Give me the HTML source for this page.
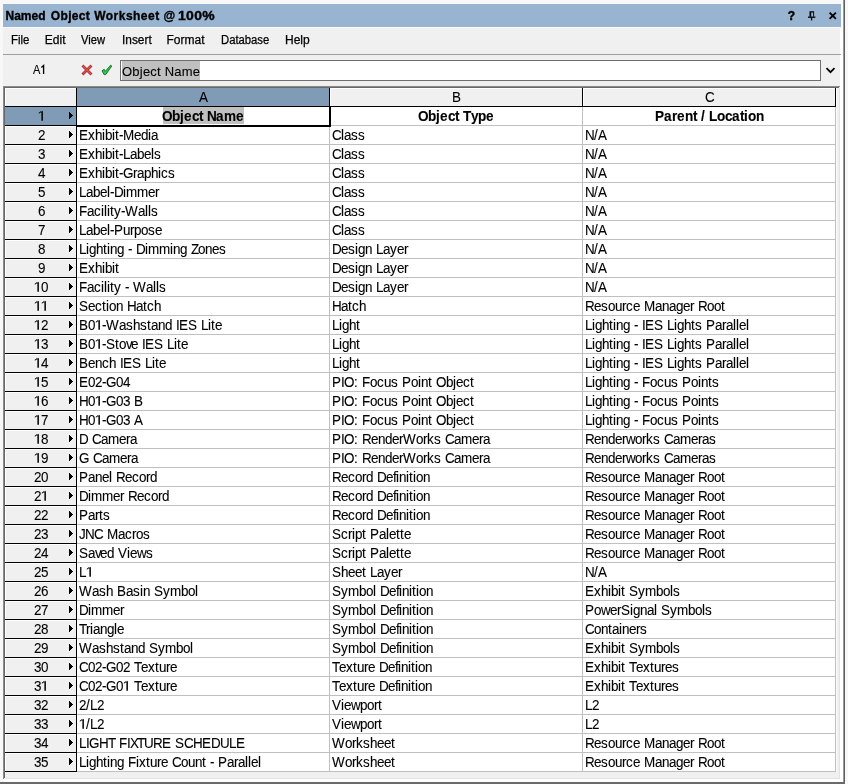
<!DOCTYPE html>
<html><head><meta charset="utf-8"><style>
*{margin:0;padding:0;box-sizing:border-box}
html,body{width:848px;height:784px;overflow:hidden;background:#f0f0f0;font-family:"Liberation Sans",sans-serif;color:#000}
.a{position:absolute}
.t{position:absolute;white-space:nowrap;line-height:1;-webkit-text-stroke:0.1px #000}
.f13{font-size:13px}
.g{position:absolute;white-space:nowrap;line-height:14px;height:14px;font-size:14px;-webkit-text-stroke:0.1px #000}
.g i{display:inline-block;font-style:normal;height:14px;transform:scaleX(0.96);transform-origin:0 0;vertical-align:top}
.g.b{font-weight:bold}
.g.b i{transform:scaleX(0.97)}
.tri{position:absolute;left:69px;width:4px;height:7px;background:linear-gradient(#000,#000) 0 0/1px 7px no-repeat,linear-gradient(#000,#000) 1px 1px/1px 5px no-repeat,linear-gradient(#000,#000) 2px 2px/1px 3px no-repeat,linear-gradient(#000,#000) 3px 3px/1px 1px no-repeat}
</style></head>
<body>
<div id="root" style="position:absolute;left:0;top:0;width:848px;height:784px;will-change:transform">
<div class="a" style="left:0px;top:0px;width:848px;height:784px;background:#f8f8f8"></div>
<div class="a" style="left:3px;top:4px;width:840px;height:778px;background:#f0f0f0"></div>
<div class="a" style="left:840px;top:4px;width:3px;height:778px;background:#ffffff"></div>
<div class="a" style="left:3px;top:779px;width:840px;height:3px;background:#ffffff"></div>
<div class="a" style="left:843px;top:0px;width:1px;height:784px;background:#9a9a9a"></div>
<div class="a" style="left:844px;top:0px;width:1px;height:784px;background:#5e5e5e"></div>
<div class="a" style="left:0px;top:782px;width:845px;height:2px;background:#6a6a6a"></div>
<div class="a" style="left:3px;top:4px;width:838px;height:23px;background:#99b4d1"></div>
<div class="a" style="left:3px;top:27px;width:838px;height:1px;background:#fafafa"></div>
<div class="t" style="left:5.5px;top:9.84px;font-size:12px;height:12px;font-weight:bold;color:#000;letter-spacing:0px;-webkit-text-stroke:0.35px #000;">Named</div>
<div class="t" style="left:50.8px;top:9.84px;font-size:12px;height:12px;font-weight:bold;color:#000;letter-spacing:0.34px;-webkit-text-stroke:0.35px #000;">Object</div>
<div class="t" style="left:94.2px;top:9.84px;font-size:12px;height:12px;font-weight:bold;color:#000;letter-spacing:0.48px;-webkit-text-stroke:0.35px #000;">Worksheet</div>
<div class="t" style="left:163.5px;top:9.84px;font-size:12px;height:12px;font-weight:bold;color:#000;letter-spacing:0px;-webkit-text-stroke:0.35px #000;">@</div>
<div class="t" style="left:178.3px;top:9.84px;font-size:12px;height:12px;font-weight:bold;color:#000;transform:scaleX(1.16);transform-origin:0 0;letter-spacing:0.3px;-webkit-text-stroke:0.35px #000;">100%</div>
<svg class="a" style="left:786px;top:9px" width="56" height="14" viewBox="786 9 56 14">
<text x="787.8" y="19.6" font-family="Liberation Sans" font-weight="bold" font-size="12" fill="#000" stroke="#000" stroke-width="0.4">?</text>
<path d="M809.5 11.2h4.6v5.6h-4.6z M811.2 12.4h2v4.4h-2z" fill="#000" fill-rule="evenodd"/>
<path d="M808 17.2h7.4" stroke="#000" stroke-width="1.3"/>
<path d="M811.6 17.5v3" stroke="#000" stroke-width="1.3"/>
<path d="M829.6 12.6l6.3 6.3M835.9 12.6l-6.3 6.3" stroke="#000" stroke-width="1.9"/>
</svg>
<div class="t" style="left:11.2px;top:34.14px;font-size:12px;height:12px;color:#000;transform:scaleX(0.95);transform-origin:0 0;-webkit-text-stroke:0.25px #000;">File</div>
<div class="t" style="left:44.8px;top:34.14px;font-size:12px;height:12px;color:#000;-webkit-text-stroke:0.25px #000;">Edit</div>
<div class="t" style="left:81px;top:34.14px;font-size:12px;height:12px;color:#000;transform:scaleX(0.93);transform-origin:0 0;-webkit-text-stroke:0.25px #000;">View</div>
<div class="t" style="left:121.5px;top:34.14px;font-size:12px;height:12px;color:#000;transform:scaleX(0.99);transform-origin:0 0;-webkit-text-stroke:0.25px #000;">Insert</div>
<div class="t" style="left:166.5px;top:34.14px;font-size:12px;height:12px;color:#000;-webkit-text-stroke:0.25px #000;">Format</div>
<div class="t" style="left:221px;top:34.14px;font-size:12px;height:12px;color:#000;transform:scaleX(0.94);transform-origin:0 0;-webkit-text-stroke:0.25px #000;">Database</div>
<div class="t" style="left:285px;top:34.14px;font-size:12px;height:12px;color:#000;-webkit-text-stroke:0.25px #000;">Help</div>
<div class="a" style="left:3px;top:54px;width:838px;height:1px;background:#a0a0a0"></div>
<div class="t" style="left:32.6px;top:64.04px;font-size:12px;height:12px;color:#000;transform:scaleX(0.92);transform-origin:0 0;">A</div>
<svg class="a" style="left:38px;top:62px" width="10" height="14" viewBox="38 62 10 14"><path d="M41.4 67.4L43.6 65.5V74" stroke="#000" stroke-width="1.3" fill="none"/></svg>
<svg class="a" style="left:80px;top:62px" width="36" height="16" viewBox="80 62 36 16">
<path d="M83.4 66.4l7.1 7.1M90.5 66.4l-7.1 7.1" stroke="#a83a3a" stroke-width="2.8" stroke-linecap="square"/>
<path d="M83.4 66.4l7.1 7.1M90.5 66.4l-7.1 7.1" stroke="#e04a4a" stroke-width="1.2" stroke-linecap="square"/>
<path d="M102 70.8L104.2 69.3L105.3 71.4L110.6 65.2L111.8 66L105.8 74.5L104.2 74.7Z" fill="#2fc850" stroke="#0d6a22" stroke-width="0.9" stroke-linejoin="round"/>
</svg>
<div class="a" style="left:120px;top:60px;width:701px;height:21px;background:#fff;border:1px solid #6e6e6e"></div>
<div class="a" style="left:122px;top:61px;width:78px;height:19px;background:#c0c0c0"></div>
<div class="t" style="left:122px;top:64.60px;font-size:13px;height:13px;color:#000;letter-spacing:0.22px;">Object Name</div>
<svg class="a" style="left:824px;top:65px" width="14" height="10" viewBox="824 65 14 10">
<path d="M826.5 68.2l4 4l4-4" stroke="#000" stroke-width="1.7" fill="none"/>
</svg>
<div class="a" style="left:3px;top:86px;width:837px;height:693px;background:#f0f0f0"></div>
<div class="a" style="left:3px;top:86px;width:837px;height:1px;background:#8a8a8a"></div>
<div class="a" style="left:3px;top:86px;width:1px;height:693px;background:#8a8a8a"></div>
<div class="a" style="left:4px;top:87px;width:835px;height:1px;background:#696969"></div>
<div class="a" style="left:4px;top:87px;width:1px;height:691px;background:#696969"></div>
<div class="a" style="left:839px;top:88px;width:1px;height:691px;background:#e3e3e3"></div>
<div class="a" style="left:5px;top:778px;width:835px;height:1px;background:#e3e3e3"></div>
<div class="a" style="left:836px;top:88px;width:1px;height:684px;background:#fbfbfb"></div>
<div class="a" style="left:77px;top:107px;width:758px;height:665px;background:#ffffff"></div>
<div class="a" style="left:5px;top:88px;width:71px;height:18px;background:#f0f0f0"></div>
<div class="a" style="left:5px;top:88px;width:71px;height:1px;background:#ffffff"></div>
<div class="a" style="left:5px;top:88px;width:1px;height:18px;background:#ffffff"></div>
<div class="a" style="left:5px;top:106px;width:72px;height:1px;background:#000"></div>
<div class="a" style="left:76px;top:88px;width:1px;height:19px;background:#000"></div>
<div class="a" style="left:77px;top:88px;width:252px;height:18px;background:#7f9bb5"></div>
<div class="a" style="left:329px;top:88px;width:1px;height:19px;background:#000"></div>
<div class="a" style="left:77px;top:106px;width:253px;height:1px;background:#000"></div>
<div class="g" style="left:199px;top:90.15px"><i style="width:9px">A</i></div>
<div class="a" style="left:330px;top:88px;width:252px;height:18px;background:#f0f0f0"></div>
<div class="a" style="left:330px;top:88px;width:252px;height:1px;background:#ffffff"></div>
<div class="a" style="left:330px;top:88px;width:1px;height:18px;background:#ffffff"></div>
<div class="a" style="left:582px;top:88px;width:1px;height:19px;background:#000"></div>
<div class="a" style="left:330px;top:106px;width:253px;height:1px;background:#000"></div>
<div class="g" style="left:452px;top:90.15px"><i style="width:9px">B</i></div>
<div class="a" style="left:583px;top:88px;width:252px;height:18px;background:#f0f0f0"></div>
<div class="a" style="left:583px;top:88px;width:252px;height:1px;background:#ffffff"></div>
<div class="a" style="left:583px;top:88px;width:1px;height:18px;background:#ffffff"></div>
<div class="a" style="left:835px;top:88px;width:1px;height:19px;background:#000"></div>
<div class="a" style="left:583px;top:106px;width:253px;height:1px;background:#000"></div>
<div class="g" style="left:705px;top:90.15px"><i style="width:9px">C</i></div>
<div class="a" style="left:5px;top:107px;width:71px;height:18px;background:#7f9bb5"></div>
<div class="a" style="left:5px;top:125px;width:72px;height:1px;background:#000"></div>
<div class="a" style="left:76px;top:107px;width:1px;height:18px;background:#000"></div>
<div class="g" style="left:38px;top:109.15px"><i style="width:7px;transform:none"><svg width="7" height="14" style="display:block"><path d="M3.4 1.85h1.5v10h-1.5z M4.9 1.85L3.4 1.85L0.8 3.7L0.8 4.7L3.4 3.1z"/></svg></i></div>
<div class="tri" style="top:112px"></div>
<div class="a" style="left:77px;top:125px;width:759px;height:1px;background:#c0c0c0"></div>
<div class="a" style="left:163px;top:107px;width:81px;height:17px;background:#c0c0c0"></div>
<div class="g b" style="left:162px;top:109.15px"><i style="width:10px">O</i><i style="width:8px">b</i><i style="width:4px">j</i><i style="width:8px">e</i><i style="width:7px">c</i><i style="width:4px">t</i><i style="width:4px"></i><i style="width:9px">N</i><i style="width:8px">a</i><i style="width:12px">m</i><i style="width:8px">e</i></div>
<div class="g b" style="left:418px;top:109.15px"><i style="width:10px">O</i><i style="width:8px">b</i><i style="width:4px">j</i><i style="width:8px">e</i><i style="width:7px">c</i><i style="width:4px">t</i><i style="width:4px"></i><i style="width:8px">T</i><i style="width:7px">y</i><i style="width:8px">p</i><i style="width:8px">e</i></div>
<div class="g b" style="left:655px;top:109.15px"><i style="width:9px">P</i><i style="width:8px">a</i><i style="width:5px">r</i><i style="width:8px">e</i><i style="width:8px">n</i><i style="width:4px">t</i><i style="width:4px"></i><i style="width:4px">/</i><i style="width:4px"></i><i style="width:8px">L</i><i style="width:8px">o</i><i style="width:7px">c</i><i style="width:8px">a</i><i style="width:4px">t</i><i style="width:4px">i</i><i style="width:8px">o</i><i style="width:8px">n</i></div>
<div class="a" style="left:5px;top:126px;width:71px;height:18px;background:#f0f0f0"></div>
<div class="a" style="left:5px;top:126px;width:71px;height:1px;background:#ffffff"></div>
<div class="a" style="left:5px;top:126px;width:1px;height:18px;background:#ffffff"></div>
<div class="a" style="left:5px;top:144px;width:72px;height:1px;background:#000"></div>
<div class="a" style="left:76px;top:126px;width:1px;height:18px;background:#000"></div>
<div class="g" style="left:38px;top:128.15px"><i style="width:7px">2</i></div>
<div class="tri" style="top:131px"></div>
<div class="a" style="left:77px;top:144px;width:759px;height:1px;background:#c0c0c0"></div>
<div class="g" style="left:79px;top:128.15px"><i style="width:9px">E</i><i style="width:7px">x</i><i style="width:7px">h</i><i style="width:3px">i</i><i style="width:7px">b</i><i style="width:3px">i</i><i style="width:4px">t</i><i style="width:4px">-</i><i style="width:11px">M</i><i style="width:7px">e</i><i style="width:7px">d</i><i style="width:3px">i</i><i style="width:7px">a</i></div>
<div class="g" style="left:332px;top:128.15px"><i style="width:9px">C</i><i style="width:3px">l</i><i style="width:7px">a</i><i style="width:7px">s</i><i style="width:7px">s</i></div>
<div class="g" style="left:585px;top:128.15px"><i style="width:9px">N</i><i style="width:4px">/</i><i style="width:9px">A</i></div>
<div class="a" style="left:5px;top:145px;width:71px;height:18px;background:#f0f0f0"></div>
<div class="a" style="left:5px;top:145px;width:71px;height:1px;background:#ffffff"></div>
<div class="a" style="left:5px;top:145px;width:1px;height:18px;background:#ffffff"></div>
<div class="a" style="left:5px;top:163px;width:72px;height:1px;background:#000"></div>
<div class="a" style="left:76px;top:145px;width:1px;height:18px;background:#000"></div>
<div class="g" style="left:38px;top:147.15px"><i style="width:7px">3</i></div>
<div class="tri" style="top:150px"></div>
<div class="a" style="left:77px;top:163px;width:759px;height:1px;background:#c0c0c0"></div>
<div class="g" style="left:79px;top:147.15px"><i style="width:9px">E</i><i style="width:7px">x</i><i style="width:7px">h</i><i style="width:3px">i</i><i style="width:7px">b</i><i style="width:3px">i</i><i style="width:4px">t</i><i style="width:4px">-</i><i style="width:7px">L</i><i style="width:7px">a</i><i style="width:7px">b</i><i style="width:7px">e</i><i style="width:3px">l</i><i style="width:7px">s</i></div>
<div class="g" style="left:332px;top:147.15px"><i style="width:9px">C</i><i style="width:3px">l</i><i style="width:7px">a</i><i style="width:7px">s</i><i style="width:7px">s</i></div>
<div class="g" style="left:585px;top:147.15px"><i style="width:9px">N</i><i style="width:4px">/</i><i style="width:9px">A</i></div>
<div class="a" style="left:5px;top:164px;width:71px;height:18px;background:#f0f0f0"></div>
<div class="a" style="left:5px;top:164px;width:71px;height:1px;background:#ffffff"></div>
<div class="a" style="left:5px;top:164px;width:1px;height:18px;background:#ffffff"></div>
<div class="a" style="left:5px;top:182px;width:72px;height:1px;background:#000"></div>
<div class="a" style="left:76px;top:164px;width:1px;height:18px;background:#000"></div>
<div class="g" style="left:38px;top:166.15px"><i style="width:7px">4</i></div>
<div class="tri" style="top:169px"></div>
<div class="a" style="left:77px;top:182px;width:759px;height:1px;background:#c0c0c0"></div>
<div class="g" style="left:79px;top:166.15px"><i style="width:9px">E</i><i style="width:7px">x</i><i style="width:7px">h</i><i style="width:3px">i</i><i style="width:7px">b</i><i style="width:3px">i</i><i style="width:4px">t</i><i style="width:4px">-</i><i style="width:10px">G</i><i style="width:4px">r</i><i style="width:7px">a</i><i style="width:7px">p</i><i style="width:7px">h</i><i style="width:3px">i</i><i style="width:7px">c</i><i style="width:7px">s</i></div>
<div class="g" style="left:332px;top:166.15px"><i style="width:9px">C</i><i style="width:3px">l</i><i style="width:7px">a</i><i style="width:7px">s</i><i style="width:7px">s</i></div>
<div class="g" style="left:585px;top:166.15px"><i style="width:9px">N</i><i style="width:4px">/</i><i style="width:9px">A</i></div>
<div class="a" style="left:5px;top:183px;width:71px;height:18px;background:#f0f0f0"></div>
<div class="a" style="left:5px;top:183px;width:71px;height:1px;background:#ffffff"></div>
<div class="a" style="left:5px;top:183px;width:1px;height:18px;background:#ffffff"></div>
<div class="a" style="left:5px;top:201px;width:72px;height:1px;background:#000"></div>
<div class="a" style="left:76px;top:183px;width:1px;height:18px;background:#000"></div>
<div class="g" style="left:38px;top:185.15px"><i style="width:7px">5</i></div>
<div class="tri" style="top:188px"></div>
<div class="a" style="left:77px;top:201px;width:759px;height:1px;background:#c0c0c0"></div>
<div class="g" style="left:79px;top:185.15px"><i style="width:7px">L</i><i style="width:7px">a</i><i style="width:7px">b</i><i style="width:7px">e</i><i style="width:3px">l</i><i style="width:4px">-</i><i style="width:9px">D</i><i style="width:3px">i</i><i style="width:11px">m</i><i style="width:11px">m</i><i style="width:7px">e</i><i style="width:4px">r</i></div>
<div class="g" style="left:332px;top:185.15px"><i style="width:9px">C</i><i style="width:3px">l</i><i style="width:7px">a</i><i style="width:7px">s</i><i style="width:7px">s</i></div>
<div class="g" style="left:585px;top:185.15px"><i style="width:9px">N</i><i style="width:4px">/</i><i style="width:9px">A</i></div>
<div class="a" style="left:5px;top:202px;width:71px;height:18px;background:#f0f0f0"></div>
<div class="a" style="left:5px;top:202px;width:71px;height:1px;background:#ffffff"></div>
<div class="a" style="left:5px;top:202px;width:1px;height:18px;background:#ffffff"></div>
<div class="a" style="left:5px;top:220px;width:72px;height:1px;background:#000"></div>
<div class="a" style="left:76px;top:202px;width:1px;height:18px;background:#000"></div>
<div class="g" style="left:38px;top:204.15px"><i style="width:7px">6</i></div>
<div class="tri" style="top:207px"></div>
<div class="a" style="left:77px;top:220px;width:759px;height:1px;background:#c0c0c0"></div>
<div class="g" style="left:79px;top:204.15px"><i style="width:8px">F</i><i style="width:7px">a</i><i style="width:7px">c</i><i style="width:3px">i</i><i style="width:3px">l</i><i style="width:3px">i</i><i style="width:4px">t</i><i style="width:7px">y</i><i style="width:4px">-</i><i style="width:13px">W</i><i style="width:7px">a</i><i style="width:3px">l</i><i style="width:3px">l</i><i style="width:7px">s</i></div>
<div class="g" style="left:332px;top:204.15px"><i style="width:9px">C</i><i style="width:3px">l</i><i style="width:7px">a</i><i style="width:7px">s</i><i style="width:7px">s</i></div>
<div class="g" style="left:585px;top:204.15px"><i style="width:9px">N</i><i style="width:4px">/</i><i style="width:9px">A</i></div>
<div class="a" style="left:5px;top:221px;width:71px;height:18px;background:#f0f0f0"></div>
<div class="a" style="left:5px;top:221px;width:71px;height:1px;background:#ffffff"></div>
<div class="a" style="left:5px;top:221px;width:1px;height:18px;background:#ffffff"></div>
<div class="a" style="left:5px;top:239px;width:72px;height:1px;background:#000"></div>
<div class="a" style="left:76px;top:221px;width:1px;height:18px;background:#000"></div>
<div class="g" style="left:38px;top:223.15px"><i style="width:7px">7</i></div>
<div class="tri" style="top:226px"></div>
<div class="a" style="left:77px;top:239px;width:759px;height:1px;background:#c0c0c0"></div>
<div class="g" style="left:79px;top:223.15px"><i style="width:7px">L</i><i style="width:7px">a</i><i style="width:7px">b</i><i style="width:7px">e</i><i style="width:3px">l</i><i style="width:4px">-</i><i style="width:9px">P</i><i style="width:7px">u</i><i style="width:4px">r</i><i style="width:7px">p</i><i style="width:7px">o</i><i style="width:7px">s</i><i style="width:7px">e</i></div>
<div class="g" style="left:332px;top:223.15px"><i style="width:9px">C</i><i style="width:3px">l</i><i style="width:7px">a</i><i style="width:7px">s</i><i style="width:7px">s</i></div>
<div class="g" style="left:585px;top:223.15px"><i style="width:9px">N</i><i style="width:4px">/</i><i style="width:9px">A</i></div>
<div class="a" style="left:5px;top:240px;width:71px;height:18px;background:#f0f0f0"></div>
<div class="a" style="left:5px;top:240px;width:71px;height:1px;background:#ffffff"></div>
<div class="a" style="left:5px;top:240px;width:1px;height:18px;background:#ffffff"></div>
<div class="a" style="left:5px;top:258px;width:72px;height:1px;background:#000"></div>
<div class="a" style="left:76px;top:240px;width:1px;height:18px;background:#000"></div>
<div class="g" style="left:38px;top:242.15px"><i style="width:7px">8</i></div>
<div class="tri" style="top:245px"></div>
<div class="a" style="left:77px;top:258px;width:759px;height:1px;background:#c0c0c0"></div>
<div class="g" style="left:79px;top:242.15px"><i style="width:7px">L</i><i style="width:3px">i</i><i style="width:7px">g</i><i style="width:7px">h</i><i style="width:4px">t</i><i style="width:3px">i</i><i style="width:7px">n</i><i style="width:7px">g</i><i style="width:4px"></i><i style="width:4px">-</i><i style="width:4px"></i><i style="width:9px">D</i><i style="width:3px">i</i><i style="width:11px">m</i><i style="width:11px">m</i><i style="width:3px">i</i><i style="width:7px">n</i><i style="width:7px">g</i><i style="width:4px"></i><i style="width:7px">Z</i><i style="width:7px">o</i><i style="width:7px">n</i><i style="width:7px">e</i><i style="width:7px">s</i></div>
<div class="g" style="left:332px;top:242.15px"><i style="width:9px">D</i><i style="width:7px">e</i><i style="width:7px">s</i><i style="width:3px">i</i><i style="width:7px">g</i><i style="width:7px">n</i><i style="width:4px"></i><i style="width:7px">L</i><i style="width:7px">a</i><i style="width:7px">y</i><i style="width:7px">e</i><i style="width:4px">r</i></div>
<div class="g" style="left:585px;top:242.15px"><i style="width:9px">N</i><i style="width:4px">/</i><i style="width:9px">A</i></div>
<div class="a" style="left:5px;top:259px;width:71px;height:18px;background:#f0f0f0"></div>
<div class="a" style="left:5px;top:259px;width:71px;height:1px;background:#ffffff"></div>
<div class="a" style="left:5px;top:259px;width:1px;height:18px;background:#ffffff"></div>
<div class="a" style="left:5px;top:277px;width:72px;height:1px;background:#000"></div>
<div class="a" style="left:76px;top:259px;width:1px;height:18px;background:#000"></div>
<div class="g" style="left:38px;top:261.15px"><i style="width:7px">9</i></div>
<div class="tri" style="top:264px"></div>
<div class="a" style="left:77px;top:277px;width:759px;height:1px;background:#c0c0c0"></div>
<div class="g" style="left:79px;top:261.15px"><i style="width:9px">E</i><i style="width:7px">x</i><i style="width:7px">h</i><i style="width:3px">i</i><i style="width:7px">b</i><i style="width:3px">i</i><i style="width:4px">t</i></div>
<div class="g" style="left:332px;top:261.15px"><i style="width:9px">D</i><i style="width:7px">e</i><i style="width:7px">s</i><i style="width:3px">i</i><i style="width:7px">g</i><i style="width:7px">n</i><i style="width:4px"></i><i style="width:7px">L</i><i style="width:7px">a</i><i style="width:7px">y</i><i style="width:7px">e</i><i style="width:4px">r</i></div>
<div class="g" style="left:585px;top:261.15px"><i style="width:9px">N</i><i style="width:4px">/</i><i style="width:9px">A</i></div>
<div class="a" style="left:5px;top:278px;width:71px;height:18px;background:#f0f0f0"></div>
<div class="a" style="left:5px;top:278px;width:71px;height:1px;background:#ffffff"></div>
<div class="a" style="left:5px;top:278px;width:1px;height:18px;background:#ffffff"></div>
<div class="a" style="left:5px;top:296px;width:72px;height:1px;background:#000"></div>
<div class="a" style="left:76px;top:278px;width:1px;height:18px;background:#000"></div>
<div class="g" style="left:34px;top:280.15px"><i style="width:7px;transform:none"><svg width="7" height="14" style="display:block"><path d="M3.4 1.85h1.5v10h-1.5z M4.9 1.85L3.4 1.85L0.8 3.7L0.8 4.7L3.4 3.1z"/></svg></i><i style="width:7px">0</i></div>
<div class="tri" style="top:283px"></div>
<div class="a" style="left:77px;top:296px;width:759px;height:1px;background:#c0c0c0"></div>
<div class="g" style="left:79px;top:280.15px"><i style="width:8px">F</i><i style="width:7px">a</i><i style="width:7px">c</i><i style="width:3px">i</i><i style="width:3px">l</i><i style="width:3px">i</i><i style="width:4px">t</i><i style="width:7px">y</i><i style="width:4px"></i><i style="width:4px">-</i><i style="width:4px"></i><i style="width:13px">W</i><i style="width:7px">a</i><i style="width:3px">l</i><i style="width:3px">l</i><i style="width:7px">s</i></div>
<div class="g" style="left:332px;top:280.15px"><i style="width:9px">D</i><i style="width:7px">e</i><i style="width:7px">s</i><i style="width:3px">i</i><i style="width:7px">g</i><i style="width:7px">n</i><i style="width:4px"></i><i style="width:7px">L</i><i style="width:7px">a</i><i style="width:7px">y</i><i style="width:7px">e</i><i style="width:4px">r</i></div>
<div class="g" style="left:585px;top:280.15px"><i style="width:9px">N</i><i style="width:4px">/</i><i style="width:9px">A</i></div>
<div class="a" style="left:5px;top:297px;width:71px;height:18px;background:#f0f0f0"></div>
<div class="a" style="left:5px;top:297px;width:71px;height:1px;background:#ffffff"></div>
<div class="a" style="left:5px;top:297px;width:1px;height:18px;background:#ffffff"></div>
<div class="a" style="left:5px;top:315px;width:72px;height:1px;background:#000"></div>
<div class="a" style="left:76px;top:297px;width:1px;height:18px;background:#000"></div>
<div class="g" style="left:34px;top:299.15px"><i style="width:7px;transform:none"><svg width="7" height="14" style="display:block"><path d="M3.4 1.85h1.5v10h-1.5z M4.9 1.85L3.4 1.85L0.8 3.7L0.8 4.7L3.4 3.1z"/></svg></i><i style="width:7px;transform:none"><svg width="7" height="14" style="display:block"><path d="M3.4 1.85h1.5v10h-1.5z M4.9 1.85L3.4 1.85L0.8 3.7L0.8 4.7L3.4 3.1z"/></svg></i></div>
<div class="tri" style="top:302px"></div>
<div class="a" style="left:77px;top:315px;width:759px;height:1px;background:#c0c0c0"></div>
<div class="g" style="left:79px;top:299.15px"><i style="width:9px">S</i><i style="width:7px">e</i><i style="width:7px">c</i><i style="width:4px">t</i><i style="width:3px">i</i><i style="width:7px">o</i><i style="width:7px">n</i><i style="width:4px"></i><i style="width:9px">H</i><i style="width:7px">a</i><i style="width:4px">t</i><i style="width:7px">c</i><i style="width:7px">h</i></div>
<div class="g" style="left:332px;top:299.15px"><i style="width:9px">H</i><i style="width:7px">a</i><i style="width:4px">t</i><i style="width:7px">c</i><i style="width:7px">h</i></div>
<div class="g" style="left:585px;top:299.15px"><i style="width:9px">R</i><i style="width:7px">e</i><i style="width:7px">s</i><i style="width:7px">o</i><i style="width:7px">u</i><i style="width:4px">r</i><i style="width:7px">c</i><i style="width:7px">e</i><i style="width:4px"></i><i style="width:11px">M</i><i style="width:7px">a</i><i style="width:7px">n</i><i style="width:7px">a</i><i style="width:7px">g</i><i style="width:7px">e</i><i style="width:4px">r</i><i style="width:4px"></i><i style="width:9px">R</i><i style="width:7px">o</i><i style="width:7px">o</i><i style="width:4px">t</i></div>
<div class="a" style="left:5px;top:316px;width:71px;height:18px;background:#f0f0f0"></div>
<div class="a" style="left:5px;top:316px;width:71px;height:1px;background:#ffffff"></div>
<div class="a" style="left:5px;top:316px;width:1px;height:18px;background:#ffffff"></div>
<div class="a" style="left:5px;top:334px;width:72px;height:1px;background:#000"></div>
<div class="a" style="left:76px;top:316px;width:1px;height:18px;background:#000"></div>
<div class="g" style="left:34px;top:318.15px"><i style="width:7px;transform:none"><svg width="7" height="14" style="display:block"><path d="M3.4 1.85h1.5v10h-1.5z M4.9 1.85L3.4 1.85L0.8 3.7L0.8 4.7L3.4 3.1z"/></svg></i><i style="width:7px">2</i></div>
<div class="tri" style="top:321px"></div>
<div class="a" style="left:77px;top:334px;width:759px;height:1px;background:#c0c0c0"></div>
<div class="g" style="left:79px;top:318.15px"><i style="width:9px">B</i><i style="width:7px">0</i><i style="width:7px;transform:none"><svg width="7" height="14" style="display:block"><path d="M3.4 1.85h1.5v10h-1.5z M4.9 1.85L3.4 1.85L0.8 3.7L0.8 4.7L3.4 3.1z"/></svg></i><i style="width:4px">-</i><i style="width:13px">W</i><i style="width:7px">a</i><i style="width:7px">s</i><i style="width:7px">h</i><i style="width:7px">s</i><i style="width:4px">t</i><i style="width:7px">a</i><i style="width:7px">n</i><i style="width:7px">d</i><i style="width:4px"></i><i style="width:3px">I</i><i style="width:9px">E</i><i style="width:9px">S</i><i style="width:4px"></i><i style="width:7px">L</i><i style="width:3px">i</i><i style="width:4px">t</i><i style="width:7px">e</i></div>
<div class="g" style="left:332px;top:318.15px"><i style="width:7px">L</i><i style="width:3px">i</i><i style="width:7px">g</i><i style="width:7px">h</i><i style="width:4px">t</i></div>
<div class="g" style="left:585px;top:318.15px"><i style="width:7px">L</i><i style="width:3px">i</i><i style="width:7px">g</i><i style="width:7px">h</i><i style="width:4px">t</i><i style="width:3px">i</i><i style="width:7px">n</i><i style="width:7px">g</i><i style="width:4px"></i><i style="width:4px">-</i><i style="width:4px"></i><i style="width:3px">I</i><i style="width:9px">E</i><i style="width:9px">S</i><i style="width:4px"></i><i style="width:7px">L</i><i style="width:3px">i</i><i style="width:7px">g</i><i style="width:7px">h</i><i style="width:4px">t</i><i style="width:7px">s</i><i style="width:4px"></i><i style="width:9px">P</i><i style="width:7px">a</i><i style="width:4px">r</i><i style="width:7px">a</i><i style="width:3px">l</i><i style="width:3px">l</i><i style="width:7px">e</i><i style="width:3px">l</i></div>
<div class="a" style="left:5px;top:335px;width:71px;height:18px;background:#f0f0f0"></div>
<div class="a" style="left:5px;top:335px;width:71px;height:1px;background:#ffffff"></div>
<div class="a" style="left:5px;top:335px;width:1px;height:18px;background:#ffffff"></div>
<div class="a" style="left:5px;top:353px;width:72px;height:1px;background:#000"></div>
<div class="a" style="left:76px;top:335px;width:1px;height:18px;background:#000"></div>
<div class="g" style="left:34px;top:337.15px"><i style="width:7px;transform:none"><svg width="7" height="14" style="display:block"><path d="M3.4 1.85h1.5v10h-1.5z M4.9 1.85L3.4 1.85L0.8 3.7L0.8 4.7L3.4 3.1z"/></svg></i><i style="width:7px">3</i></div>
<div class="tri" style="top:340px"></div>
<div class="a" style="left:77px;top:353px;width:759px;height:1px;background:#c0c0c0"></div>
<div class="g" style="left:79px;top:337.15px"><i style="width:9px">B</i><i style="width:7px">0</i><i style="width:7px;transform:none"><svg width="7" height="14" style="display:block"><path d="M3.4 1.85h1.5v10h-1.5z M4.9 1.85L3.4 1.85L0.8 3.7L0.8 4.7L3.4 3.1z"/></svg></i><i style="width:4px">-</i><i style="width:9px">S</i><i style="width:4px">t</i><i style="width:7px">o</i><i style="width:5px">v</i><i style="width:7px">e</i><i style="width:4px"></i><i style="width:3px">I</i><i style="width:9px">E</i><i style="width:9px">S</i><i style="width:4px"></i><i style="width:7px">L</i><i style="width:3px">i</i><i style="width:4px">t</i><i style="width:7px">e</i></div>
<div class="g" style="left:332px;top:337.15px"><i style="width:7px">L</i><i style="width:3px">i</i><i style="width:7px">g</i><i style="width:7px">h</i><i style="width:4px">t</i></div>
<div class="g" style="left:585px;top:337.15px"><i style="width:7px">L</i><i style="width:3px">i</i><i style="width:7px">g</i><i style="width:7px">h</i><i style="width:4px">t</i><i style="width:3px">i</i><i style="width:7px">n</i><i style="width:7px">g</i><i style="width:4px"></i><i style="width:4px">-</i><i style="width:4px"></i><i style="width:3px">I</i><i style="width:9px">E</i><i style="width:9px">S</i><i style="width:4px"></i><i style="width:7px">L</i><i style="width:3px">i</i><i style="width:7px">g</i><i style="width:7px">h</i><i style="width:4px">t</i><i style="width:7px">s</i><i style="width:4px"></i><i style="width:9px">P</i><i style="width:7px">a</i><i style="width:4px">r</i><i style="width:7px">a</i><i style="width:3px">l</i><i style="width:3px">l</i><i style="width:7px">e</i><i style="width:3px">l</i></div>
<div class="a" style="left:5px;top:354px;width:71px;height:18px;background:#f0f0f0"></div>
<div class="a" style="left:5px;top:354px;width:71px;height:1px;background:#ffffff"></div>
<div class="a" style="left:5px;top:354px;width:1px;height:18px;background:#ffffff"></div>
<div class="a" style="left:5px;top:372px;width:72px;height:1px;background:#000"></div>
<div class="a" style="left:76px;top:354px;width:1px;height:18px;background:#000"></div>
<div class="g" style="left:34px;top:356.15px"><i style="width:7px;transform:none"><svg width="7" height="14" style="display:block"><path d="M3.4 1.85h1.5v10h-1.5z M4.9 1.85L3.4 1.85L0.8 3.7L0.8 4.7L3.4 3.1z"/></svg></i><i style="width:7px">4</i></div>
<div class="tri" style="top:359px"></div>
<div class="a" style="left:77px;top:372px;width:759px;height:1px;background:#c0c0c0"></div>
<div class="g" style="left:79px;top:356.15px"><i style="width:9px">B</i><i style="width:7px">e</i><i style="width:7px">n</i><i style="width:7px">c</i><i style="width:7px">h</i><i style="width:4px"></i><i style="width:3px">I</i><i style="width:9px">E</i><i style="width:9px">S</i><i style="width:4px"></i><i style="width:7px">L</i><i style="width:3px">i</i><i style="width:4px">t</i><i style="width:7px">e</i></div>
<div class="g" style="left:332px;top:356.15px"><i style="width:7px">L</i><i style="width:3px">i</i><i style="width:7px">g</i><i style="width:7px">h</i><i style="width:4px">t</i></div>
<div class="g" style="left:585px;top:356.15px"><i style="width:7px">L</i><i style="width:3px">i</i><i style="width:7px">g</i><i style="width:7px">h</i><i style="width:4px">t</i><i style="width:3px">i</i><i style="width:7px">n</i><i style="width:7px">g</i><i style="width:4px"></i><i style="width:4px">-</i><i style="width:4px"></i><i style="width:3px">I</i><i style="width:9px">E</i><i style="width:9px">S</i><i style="width:4px"></i><i style="width:7px">L</i><i style="width:3px">i</i><i style="width:7px">g</i><i style="width:7px">h</i><i style="width:4px">t</i><i style="width:7px">s</i><i style="width:4px"></i><i style="width:9px">P</i><i style="width:7px">a</i><i style="width:4px">r</i><i style="width:7px">a</i><i style="width:3px">l</i><i style="width:3px">l</i><i style="width:7px">e</i><i style="width:3px">l</i></div>
<div class="a" style="left:5px;top:373px;width:71px;height:18px;background:#f0f0f0"></div>
<div class="a" style="left:5px;top:373px;width:71px;height:1px;background:#ffffff"></div>
<div class="a" style="left:5px;top:373px;width:1px;height:18px;background:#ffffff"></div>
<div class="a" style="left:5px;top:391px;width:72px;height:1px;background:#000"></div>
<div class="a" style="left:76px;top:373px;width:1px;height:18px;background:#000"></div>
<div class="g" style="left:34px;top:375.15px"><i style="width:7px;transform:none"><svg width="7" height="14" style="display:block"><path d="M3.4 1.85h1.5v10h-1.5z M4.9 1.85L3.4 1.85L0.8 3.7L0.8 4.7L3.4 3.1z"/></svg></i><i style="width:7px">5</i></div>
<div class="tri" style="top:378px"></div>
<div class="a" style="left:77px;top:391px;width:759px;height:1px;background:#c0c0c0"></div>
<div class="g" style="left:79px;top:375.15px"><i style="width:9px">E</i><i style="width:7px">0</i><i style="width:7px">2</i><i style="width:4px">-</i><i style="width:10px">G</i><i style="width:7px">0</i><i style="width:7px">4</i></div>
<div class="g" style="left:332px;top:375.15px"><i style="width:9px">P</i><i style="width:3px">I</i><i style="width:10px">O</i><i style="width:4px">:</i><i style="width:4px"></i><i style="width:8px">F</i><i style="width:7px">o</i><i style="width:7px">c</i><i style="width:7px">u</i><i style="width:7px">s</i><i style="width:4px"></i><i style="width:9px">P</i><i style="width:7px">o</i><i style="width:3px">i</i><i style="width:7px">n</i><i style="width:4px">t</i><i style="width:4px"></i><i style="width:10px">O</i><i style="width:7px">b</i><i style="width:3px">j</i><i style="width:7px">e</i><i style="width:7px">c</i><i style="width:4px">t</i></div>
<div class="g" style="left:585px;top:375.15px"><i style="width:7px">L</i><i style="width:3px">i</i><i style="width:7px">g</i><i style="width:7px">h</i><i style="width:4px">t</i><i style="width:3px">i</i><i style="width:7px">n</i><i style="width:7px">g</i><i style="width:4px"></i><i style="width:4px">-</i><i style="width:4px"></i><i style="width:8px">F</i><i style="width:7px">o</i><i style="width:7px">c</i><i style="width:7px">u</i><i style="width:7px">s</i><i style="width:4px"></i><i style="width:9px">P</i><i style="width:7px">o</i><i style="width:3px">i</i><i style="width:7px">n</i><i style="width:4px">t</i><i style="width:7px">s</i></div>
<div class="a" style="left:5px;top:392px;width:71px;height:18px;background:#f0f0f0"></div>
<div class="a" style="left:5px;top:392px;width:71px;height:1px;background:#ffffff"></div>
<div class="a" style="left:5px;top:392px;width:1px;height:18px;background:#ffffff"></div>
<div class="a" style="left:5px;top:410px;width:72px;height:1px;background:#000"></div>
<div class="a" style="left:76px;top:392px;width:1px;height:18px;background:#000"></div>
<div class="g" style="left:34px;top:394.15px"><i style="width:7px;transform:none"><svg width="7" height="14" style="display:block"><path d="M3.4 1.85h1.5v10h-1.5z M4.9 1.85L3.4 1.85L0.8 3.7L0.8 4.7L3.4 3.1z"/></svg></i><i style="width:7px">6</i></div>
<div class="tri" style="top:397px"></div>
<div class="a" style="left:77px;top:410px;width:759px;height:1px;background:#c0c0c0"></div>
<div class="g" style="left:79px;top:394.15px"><i style="width:9px">H</i><i style="width:7px">0</i><i style="width:7px;transform:none"><svg width="7" height="14" style="display:block"><path d="M3.4 1.85h1.5v10h-1.5z M4.9 1.85L3.4 1.85L0.8 3.7L0.8 4.7L3.4 3.1z"/></svg></i><i style="width:4px">-</i><i style="width:10px">G</i><i style="width:7px">0</i><i style="width:7px">3</i><i style="width:4px"></i><i style="width:9px">B</i></div>
<div class="g" style="left:332px;top:394.15px"><i style="width:9px">P</i><i style="width:3px">I</i><i style="width:10px">O</i><i style="width:4px">:</i><i style="width:4px"></i><i style="width:8px">F</i><i style="width:7px">o</i><i style="width:7px">c</i><i style="width:7px">u</i><i style="width:7px">s</i><i style="width:4px"></i><i style="width:9px">P</i><i style="width:7px">o</i><i style="width:3px">i</i><i style="width:7px">n</i><i style="width:4px">t</i><i style="width:4px"></i><i style="width:10px">O</i><i style="width:7px">b</i><i style="width:3px">j</i><i style="width:7px">e</i><i style="width:7px">c</i><i style="width:4px">t</i></div>
<div class="g" style="left:585px;top:394.15px"><i style="width:7px">L</i><i style="width:3px">i</i><i style="width:7px">g</i><i style="width:7px">h</i><i style="width:4px">t</i><i style="width:3px">i</i><i style="width:7px">n</i><i style="width:7px">g</i><i style="width:4px"></i><i style="width:4px">-</i><i style="width:4px"></i><i style="width:8px">F</i><i style="width:7px">o</i><i style="width:7px">c</i><i style="width:7px">u</i><i style="width:7px">s</i><i style="width:4px"></i><i style="width:9px">P</i><i style="width:7px">o</i><i style="width:3px">i</i><i style="width:7px">n</i><i style="width:4px">t</i><i style="width:7px">s</i></div>
<div class="a" style="left:5px;top:411px;width:71px;height:18px;background:#f0f0f0"></div>
<div class="a" style="left:5px;top:411px;width:71px;height:1px;background:#ffffff"></div>
<div class="a" style="left:5px;top:411px;width:1px;height:18px;background:#ffffff"></div>
<div class="a" style="left:5px;top:429px;width:72px;height:1px;background:#000"></div>
<div class="a" style="left:76px;top:411px;width:1px;height:18px;background:#000"></div>
<div class="g" style="left:34px;top:413.15px"><i style="width:7px;transform:none"><svg width="7" height="14" style="display:block"><path d="M3.4 1.85h1.5v10h-1.5z M4.9 1.85L3.4 1.85L0.8 3.7L0.8 4.7L3.4 3.1z"/></svg></i><i style="width:7px">7</i></div>
<div class="tri" style="top:416px"></div>
<div class="a" style="left:77px;top:429px;width:759px;height:1px;background:#c0c0c0"></div>
<div class="g" style="left:79px;top:413.15px"><i style="width:9px">H</i><i style="width:7px">0</i><i style="width:7px;transform:none"><svg width="7" height="14" style="display:block"><path d="M3.4 1.85h1.5v10h-1.5z M4.9 1.85L3.4 1.85L0.8 3.7L0.8 4.7L3.4 3.1z"/></svg></i><i style="width:4px">-</i><i style="width:10px">G</i><i style="width:7px">0</i><i style="width:7px">3</i><i style="width:4px"></i><i style="width:9px">A</i></div>
<div class="g" style="left:332px;top:413.15px"><i style="width:9px">P</i><i style="width:3px">I</i><i style="width:10px">O</i><i style="width:4px">:</i><i style="width:4px"></i><i style="width:8px">F</i><i style="width:7px">o</i><i style="width:7px">c</i><i style="width:7px">u</i><i style="width:7px">s</i><i style="width:4px"></i><i style="width:9px">P</i><i style="width:7px">o</i><i style="width:3px">i</i><i style="width:7px">n</i><i style="width:4px">t</i><i style="width:4px"></i><i style="width:10px">O</i><i style="width:7px">b</i><i style="width:3px">j</i><i style="width:7px">e</i><i style="width:7px">c</i><i style="width:4px">t</i></div>
<div class="g" style="left:585px;top:413.15px"><i style="width:7px">L</i><i style="width:3px">i</i><i style="width:7px">g</i><i style="width:7px">h</i><i style="width:4px">t</i><i style="width:3px">i</i><i style="width:7px">n</i><i style="width:7px">g</i><i style="width:4px"></i><i style="width:4px">-</i><i style="width:4px"></i><i style="width:8px">F</i><i style="width:7px">o</i><i style="width:7px">c</i><i style="width:7px">u</i><i style="width:7px">s</i><i style="width:4px"></i><i style="width:9px">P</i><i style="width:7px">o</i><i style="width:3px">i</i><i style="width:7px">n</i><i style="width:4px">t</i><i style="width:7px">s</i></div>
<div class="a" style="left:5px;top:430px;width:71px;height:18px;background:#f0f0f0"></div>
<div class="a" style="left:5px;top:430px;width:71px;height:1px;background:#ffffff"></div>
<div class="a" style="left:5px;top:430px;width:1px;height:18px;background:#ffffff"></div>
<div class="a" style="left:5px;top:448px;width:72px;height:1px;background:#000"></div>
<div class="a" style="left:76px;top:430px;width:1px;height:18px;background:#000"></div>
<div class="g" style="left:34px;top:432.15px"><i style="width:7px;transform:none"><svg width="7" height="14" style="display:block"><path d="M3.4 1.85h1.5v10h-1.5z M4.9 1.85L3.4 1.85L0.8 3.7L0.8 4.7L3.4 3.1z"/></svg></i><i style="width:7px">8</i></div>
<div class="tri" style="top:435px"></div>
<div class="a" style="left:77px;top:448px;width:759px;height:1px;background:#c0c0c0"></div>
<div class="g" style="left:79px;top:432.15px"><i style="width:9px">D</i><i style="width:4px"></i><i style="width:9px">C</i><i style="width:7px">a</i><i style="width:11px">m</i><i style="width:7px">e</i><i style="width:4px">r</i><i style="width:7px">a</i></div>
<div class="g" style="left:332px;top:432.15px"><i style="width:9px">P</i><i style="width:3px">I</i><i style="width:10px">O</i><i style="width:4px">:</i><i style="width:4px"></i><i style="width:9px">R</i><i style="width:7px">e</i><i style="width:7px">n</i><i style="width:7px">d</i><i style="width:7px">e</i><i style="width:4px">r</i><i style="width:13px">W</i><i style="width:7px">o</i><i style="width:4px">r</i><i style="width:7px">k</i><i style="width:7px">s</i><i style="width:4px"></i><i style="width:9px">C</i><i style="width:7px">a</i><i style="width:11px">m</i><i style="width:7px">e</i><i style="width:4px">r</i><i style="width:7px">a</i></div>
<div class="g" style="left:585px;top:432.15px"><i style="width:9px">R</i><i style="width:7px">e</i><i style="width:7px">n</i><i style="width:7px">d</i><i style="width:7px">e</i><i style="width:4px">r</i><i style="width:9px">w</i><i style="width:7px">o</i><i style="width:4px">r</i><i style="width:7px">k</i><i style="width:7px">s</i><i style="width:4px"></i><i style="width:9px">C</i><i style="width:7px">a</i><i style="width:11px">m</i><i style="width:7px">e</i><i style="width:4px">r</i><i style="width:7px">a</i><i style="width:7px">s</i></div>
<div class="a" style="left:5px;top:449px;width:71px;height:18px;background:#f0f0f0"></div>
<div class="a" style="left:5px;top:449px;width:71px;height:1px;background:#ffffff"></div>
<div class="a" style="left:5px;top:449px;width:1px;height:18px;background:#ffffff"></div>
<div class="a" style="left:5px;top:467px;width:72px;height:1px;background:#000"></div>
<div class="a" style="left:76px;top:449px;width:1px;height:18px;background:#000"></div>
<div class="g" style="left:34px;top:451.15px"><i style="width:7px;transform:none"><svg width="7" height="14" style="display:block"><path d="M3.4 1.85h1.5v10h-1.5z M4.9 1.85L3.4 1.85L0.8 3.7L0.8 4.7L3.4 3.1z"/></svg></i><i style="width:7px">9</i></div>
<div class="tri" style="top:454px"></div>
<div class="a" style="left:77px;top:467px;width:759px;height:1px;background:#c0c0c0"></div>
<div class="g" style="left:79px;top:451.15px"><i style="width:10px">G</i><i style="width:4px"></i><i style="width:9px">C</i><i style="width:7px">a</i><i style="width:11px">m</i><i style="width:7px">e</i><i style="width:4px">r</i><i style="width:7px">a</i></div>
<div class="g" style="left:332px;top:451.15px"><i style="width:9px">P</i><i style="width:3px">I</i><i style="width:10px">O</i><i style="width:4px">:</i><i style="width:4px"></i><i style="width:9px">R</i><i style="width:7px">e</i><i style="width:7px">n</i><i style="width:7px">d</i><i style="width:7px">e</i><i style="width:4px">r</i><i style="width:13px">W</i><i style="width:7px">o</i><i style="width:4px">r</i><i style="width:7px">k</i><i style="width:7px">s</i><i style="width:4px"></i><i style="width:9px">C</i><i style="width:7px">a</i><i style="width:11px">m</i><i style="width:7px">e</i><i style="width:4px">r</i><i style="width:7px">a</i></div>
<div class="g" style="left:585px;top:451.15px"><i style="width:9px">R</i><i style="width:7px">e</i><i style="width:7px">n</i><i style="width:7px">d</i><i style="width:7px">e</i><i style="width:4px">r</i><i style="width:9px">w</i><i style="width:7px">o</i><i style="width:4px">r</i><i style="width:7px">k</i><i style="width:7px">s</i><i style="width:4px"></i><i style="width:9px">C</i><i style="width:7px">a</i><i style="width:11px">m</i><i style="width:7px">e</i><i style="width:4px">r</i><i style="width:7px">a</i><i style="width:7px">s</i></div>
<div class="a" style="left:5px;top:468px;width:71px;height:18px;background:#f0f0f0"></div>
<div class="a" style="left:5px;top:468px;width:71px;height:1px;background:#ffffff"></div>
<div class="a" style="left:5px;top:468px;width:1px;height:18px;background:#ffffff"></div>
<div class="a" style="left:5px;top:486px;width:72px;height:1px;background:#000"></div>
<div class="a" style="left:76px;top:468px;width:1px;height:18px;background:#000"></div>
<div class="g" style="left:34px;top:470.15px"><i style="width:7px">2</i><i style="width:7px">0</i></div>
<div class="tri" style="top:473px"></div>
<div class="a" style="left:77px;top:486px;width:759px;height:1px;background:#c0c0c0"></div>
<div class="g" style="left:79px;top:470.15px"><i style="width:9px">P</i><i style="width:7px">a</i><i style="width:7px">n</i><i style="width:7px">e</i><i style="width:3px">l</i><i style="width:4px"></i><i style="width:9px">R</i><i style="width:7px">e</i><i style="width:7px">c</i><i style="width:7px">o</i><i style="width:4px">r</i><i style="width:7px">d</i></div>
<div class="g" style="left:332px;top:470.15px"><i style="width:9px">R</i><i style="width:7px">e</i><i style="width:7px">c</i><i style="width:7px">o</i><i style="width:4px">r</i><i style="width:7px">d</i><i style="width:4px"></i><i style="width:9px">D</i><i style="width:7px">e</i><i style="width:3px">f</i><i style="width:3px">i</i><i style="width:7px">n</i><i style="width:3px">i</i><i style="width:4px">t</i><i style="width:3px">i</i><i style="width:7px">o</i><i style="width:7px">n</i></div>
<div class="g" style="left:585px;top:470.15px"><i style="width:9px">R</i><i style="width:7px">e</i><i style="width:7px">s</i><i style="width:7px">o</i><i style="width:7px">u</i><i style="width:4px">r</i><i style="width:7px">c</i><i style="width:7px">e</i><i style="width:4px"></i><i style="width:11px">M</i><i style="width:7px">a</i><i style="width:7px">n</i><i style="width:7px">a</i><i style="width:7px">g</i><i style="width:7px">e</i><i style="width:4px">r</i><i style="width:4px"></i><i style="width:9px">R</i><i style="width:7px">o</i><i style="width:7px">o</i><i style="width:4px">t</i></div>
<div class="a" style="left:5px;top:487px;width:71px;height:18px;background:#f0f0f0"></div>
<div class="a" style="left:5px;top:487px;width:71px;height:1px;background:#ffffff"></div>
<div class="a" style="left:5px;top:487px;width:1px;height:18px;background:#ffffff"></div>
<div class="a" style="left:5px;top:505px;width:72px;height:1px;background:#000"></div>
<div class="a" style="left:76px;top:487px;width:1px;height:18px;background:#000"></div>
<div class="g" style="left:34px;top:489.15px"><i style="width:7px">2</i><i style="width:7px;transform:none"><svg width="7" height="14" style="display:block"><path d="M3.4 1.85h1.5v10h-1.5z M4.9 1.85L3.4 1.85L0.8 3.7L0.8 4.7L3.4 3.1z"/></svg></i></div>
<div class="tri" style="top:492px"></div>
<div class="a" style="left:77px;top:505px;width:759px;height:1px;background:#c0c0c0"></div>
<div class="g" style="left:79px;top:489.15px"><i style="width:9px">D</i><i style="width:3px">i</i><i style="width:11px">m</i><i style="width:11px">m</i><i style="width:7px">e</i><i style="width:4px">r</i><i style="width:4px"></i><i style="width:9px">R</i><i style="width:7px">e</i><i style="width:7px">c</i><i style="width:7px">o</i><i style="width:4px">r</i><i style="width:7px">d</i></div>
<div class="g" style="left:332px;top:489.15px"><i style="width:9px">R</i><i style="width:7px">e</i><i style="width:7px">c</i><i style="width:7px">o</i><i style="width:4px">r</i><i style="width:7px">d</i><i style="width:4px"></i><i style="width:9px">D</i><i style="width:7px">e</i><i style="width:3px">f</i><i style="width:3px">i</i><i style="width:7px">n</i><i style="width:3px">i</i><i style="width:4px">t</i><i style="width:3px">i</i><i style="width:7px">o</i><i style="width:7px">n</i></div>
<div class="g" style="left:585px;top:489.15px"><i style="width:9px">R</i><i style="width:7px">e</i><i style="width:7px">s</i><i style="width:7px">o</i><i style="width:7px">u</i><i style="width:4px">r</i><i style="width:7px">c</i><i style="width:7px">e</i><i style="width:4px"></i><i style="width:11px">M</i><i style="width:7px">a</i><i style="width:7px">n</i><i style="width:7px">a</i><i style="width:7px">g</i><i style="width:7px">e</i><i style="width:4px">r</i><i style="width:4px"></i><i style="width:9px">R</i><i style="width:7px">o</i><i style="width:7px">o</i><i style="width:4px">t</i></div>
<div class="a" style="left:5px;top:506px;width:71px;height:18px;background:#f0f0f0"></div>
<div class="a" style="left:5px;top:506px;width:71px;height:1px;background:#ffffff"></div>
<div class="a" style="left:5px;top:506px;width:1px;height:18px;background:#ffffff"></div>
<div class="a" style="left:5px;top:524px;width:72px;height:1px;background:#000"></div>
<div class="a" style="left:76px;top:506px;width:1px;height:18px;background:#000"></div>
<div class="g" style="left:34px;top:508.15px"><i style="width:7px">2</i><i style="width:7px">2</i></div>
<div class="tri" style="top:511px"></div>
<div class="a" style="left:77px;top:524px;width:759px;height:1px;background:#c0c0c0"></div>
<div class="g" style="left:79px;top:508.15px"><i style="width:9px">P</i><i style="width:7px">a</i><i style="width:4px">r</i><i style="width:4px">t</i><i style="width:7px">s</i></div>
<div class="g" style="left:332px;top:508.15px"><i style="width:9px">R</i><i style="width:7px">e</i><i style="width:7px">c</i><i style="width:7px">o</i><i style="width:4px">r</i><i style="width:7px">d</i><i style="width:4px"></i><i style="width:9px">D</i><i style="width:7px">e</i><i style="width:3px">f</i><i style="width:3px">i</i><i style="width:7px">n</i><i style="width:3px">i</i><i style="width:4px">t</i><i style="width:3px">i</i><i style="width:7px">o</i><i style="width:7px">n</i></div>
<div class="g" style="left:585px;top:508.15px"><i style="width:9px">R</i><i style="width:7px">e</i><i style="width:7px">s</i><i style="width:7px">o</i><i style="width:7px">u</i><i style="width:4px">r</i><i style="width:7px">c</i><i style="width:7px">e</i><i style="width:4px"></i><i style="width:11px">M</i><i style="width:7px">a</i><i style="width:7px">n</i><i style="width:7px">a</i><i style="width:7px">g</i><i style="width:7px">e</i><i style="width:4px">r</i><i style="width:4px"></i><i style="width:9px">R</i><i style="width:7px">o</i><i style="width:7px">o</i><i style="width:4px">t</i></div>
<div class="a" style="left:5px;top:525px;width:71px;height:18px;background:#f0f0f0"></div>
<div class="a" style="left:5px;top:525px;width:71px;height:1px;background:#ffffff"></div>
<div class="a" style="left:5px;top:525px;width:1px;height:18px;background:#ffffff"></div>
<div class="a" style="left:5px;top:543px;width:72px;height:1px;background:#000"></div>
<div class="a" style="left:76px;top:525px;width:1px;height:18px;background:#000"></div>
<div class="g" style="left:34px;top:527.15px"><i style="width:7px">2</i><i style="width:7px">3</i></div>
<div class="tri" style="top:530px"></div>
<div class="a" style="left:77px;top:543px;width:759px;height:1px;background:#c0c0c0"></div>
<div class="g" style="left:79px;top:527.15px"><i style="width:6px">J</i><i style="width:9px">N</i><i style="width:9px">C</i><i style="width:4px"></i><i style="width:11px">M</i><i style="width:7px">a</i><i style="width:7px">c</i><i style="width:4px">r</i><i style="width:7px">o</i><i style="width:7px">s</i></div>
<div class="g" style="left:332px;top:527.15px"><i style="width:9px">S</i><i style="width:7px">c</i><i style="width:4px">r</i><i style="width:3px">i</i><i style="width:7px">p</i><i style="width:4px">t</i><i style="width:4px"></i><i style="width:9px">P</i><i style="width:7px">a</i><i style="width:3px">l</i><i style="width:7px">e</i><i style="width:4px">t</i><i style="width:4px">t</i><i style="width:7px">e</i></div>
<div class="g" style="left:585px;top:527.15px"><i style="width:9px">R</i><i style="width:7px">e</i><i style="width:7px">s</i><i style="width:7px">o</i><i style="width:7px">u</i><i style="width:4px">r</i><i style="width:7px">c</i><i style="width:7px">e</i><i style="width:4px"></i><i style="width:11px">M</i><i style="width:7px">a</i><i style="width:7px">n</i><i style="width:7px">a</i><i style="width:7px">g</i><i style="width:7px">e</i><i style="width:4px">r</i><i style="width:4px"></i><i style="width:9px">R</i><i style="width:7px">o</i><i style="width:7px">o</i><i style="width:4px">t</i></div>
<div class="a" style="left:5px;top:544px;width:71px;height:18px;background:#f0f0f0"></div>
<div class="a" style="left:5px;top:544px;width:71px;height:1px;background:#ffffff"></div>
<div class="a" style="left:5px;top:544px;width:1px;height:18px;background:#ffffff"></div>
<div class="a" style="left:5px;top:562px;width:72px;height:1px;background:#000"></div>
<div class="a" style="left:76px;top:544px;width:1px;height:18px;background:#000"></div>
<div class="g" style="left:34px;top:546.15px"><i style="width:7px">2</i><i style="width:7px">4</i></div>
<div class="tri" style="top:549px"></div>
<div class="a" style="left:77px;top:562px;width:759px;height:1px;background:#c0c0c0"></div>
<div class="g" style="left:79px;top:546.15px"><i style="width:9px">S</i><i style="width:7px">a</i><i style="width:5px">v</i><i style="width:7px">e</i><i style="width:7px">d</i><i style="width:4px"></i><i style="width:9px">V</i><i style="width:3px">i</i><i style="width:7px">e</i><i style="width:9px">w</i><i style="width:7px">s</i></div>
<div class="g" style="left:332px;top:546.15px"><i style="width:9px">S</i><i style="width:7px">c</i><i style="width:4px">r</i><i style="width:3px">i</i><i style="width:7px">p</i><i style="width:4px">t</i><i style="width:4px"></i><i style="width:9px">P</i><i style="width:7px">a</i><i style="width:3px">l</i><i style="width:7px">e</i><i style="width:4px">t</i><i style="width:4px">t</i><i style="width:7px">e</i></div>
<div class="g" style="left:585px;top:546.15px"><i style="width:9px">R</i><i style="width:7px">e</i><i style="width:7px">s</i><i style="width:7px">o</i><i style="width:7px">u</i><i style="width:4px">r</i><i style="width:7px">c</i><i style="width:7px">e</i><i style="width:4px"></i><i style="width:11px">M</i><i style="width:7px">a</i><i style="width:7px">n</i><i style="width:7px">a</i><i style="width:7px">g</i><i style="width:7px">e</i><i style="width:4px">r</i><i style="width:4px"></i><i style="width:9px">R</i><i style="width:7px">o</i><i style="width:7px">o</i><i style="width:4px">t</i></div>
<div class="a" style="left:5px;top:563px;width:71px;height:18px;background:#f0f0f0"></div>
<div class="a" style="left:5px;top:563px;width:71px;height:1px;background:#ffffff"></div>
<div class="a" style="left:5px;top:563px;width:1px;height:18px;background:#ffffff"></div>
<div class="a" style="left:5px;top:581px;width:72px;height:1px;background:#000"></div>
<div class="a" style="left:76px;top:563px;width:1px;height:18px;background:#000"></div>
<div class="g" style="left:34px;top:565.15px"><i style="width:7px">2</i><i style="width:7px">5</i></div>
<div class="tri" style="top:568px"></div>
<div class="a" style="left:77px;top:581px;width:759px;height:1px;background:#c0c0c0"></div>
<div class="g" style="left:79px;top:565.15px"><i style="width:7px">L</i><i style="width:7px;transform:none"><svg width="7" height="14" style="display:block"><path d="M3.4 1.85h1.5v10h-1.5z M4.9 1.85L3.4 1.85L0.8 3.7L0.8 4.7L3.4 3.1z"/></svg></i></div>
<div class="g" style="left:332px;top:565.15px"><i style="width:9px">S</i><i style="width:7px">h</i><i style="width:7px">e</i><i style="width:7px">e</i><i style="width:4px">t</i><i style="width:4px"></i><i style="width:7px">L</i><i style="width:7px">a</i><i style="width:7px">y</i><i style="width:7px">e</i><i style="width:4px">r</i></div>
<div class="g" style="left:585px;top:565.15px"><i style="width:9px">N</i><i style="width:4px">/</i><i style="width:9px">A</i></div>
<div class="a" style="left:5px;top:582px;width:71px;height:18px;background:#f0f0f0"></div>
<div class="a" style="left:5px;top:582px;width:71px;height:1px;background:#ffffff"></div>
<div class="a" style="left:5px;top:582px;width:1px;height:18px;background:#ffffff"></div>
<div class="a" style="left:5px;top:600px;width:72px;height:1px;background:#000"></div>
<div class="a" style="left:76px;top:582px;width:1px;height:18px;background:#000"></div>
<div class="g" style="left:34px;top:584.15px"><i style="width:7px">2</i><i style="width:7px">6</i></div>
<div class="tri" style="top:587px"></div>
<div class="a" style="left:77px;top:600px;width:759px;height:1px;background:#c0c0c0"></div>
<div class="g" style="left:79px;top:584.15px"><i style="width:13px">W</i><i style="width:7px">a</i><i style="width:7px">s</i><i style="width:7px">h</i><i style="width:4px"></i><i style="width:9px">B</i><i style="width:7px">a</i><i style="width:7px">s</i><i style="width:3px">i</i><i style="width:7px">n</i><i style="width:4px"></i><i style="width:9px">S</i><i style="width:7px">y</i><i style="width:11px">m</i><i style="width:7px">b</i><i style="width:7px">o</i><i style="width:3px">l</i></div>
<div class="g" style="left:332px;top:584.15px"><i style="width:9px">S</i><i style="width:7px">y</i><i style="width:11px">m</i><i style="width:7px">b</i><i style="width:7px">o</i><i style="width:3px">l</i><i style="width:4px"></i><i style="width:9px">D</i><i style="width:7px">e</i><i style="width:3px">f</i><i style="width:3px">i</i><i style="width:7px">n</i><i style="width:3px">i</i><i style="width:4px">t</i><i style="width:3px">i</i><i style="width:7px">o</i><i style="width:7px">n</i></div>
<div class="g" style="left:585px;top:584.15px"><i style="width:9px">E</i><i style="width:7px">x</i><i style="width:7px">h</i><i style="width:3px">i</i><i style="width:7px">b</i><i style="width:3px">i</i><i style="width:4px">t</i><i style="width:4px"></i><i style="width:9px">S</i><i style="width:7px">y</i><i style="width:11px">m</i><i style="width:7px">b</i><i style="width:7px">o</i><i style="width:3px">l</i><i style="width:7px">s</i></div>
<div class="a" style="left:5px;top:601px;width:71px;height:18px;background:#f0f0f0"></div>
<div class="a" style="left:5px;top:601px;width:71px;height:1px;background:#ffffff"></div>
<div class="a" style="left:5px;top:601px;width:1px;height:18px;background:#ffffff"></div>
<div class="a" style="left:5px;top:619px;width:72px;height:1px;background:#000"></div>
<div class="a" style="left:76px;top:601px;width:1px;height:18px;background:#000"></div>
<div class="g" style="left:34px;top:603.15px"><i style="width:7px">2</i><i style="width:7px">7</i></div>
<div class="tri" style="top:606px"></div>
<div class="a" style="left:77px;top:619px;width:759px;height:1px;background:#c0c0c0"></div>
<div class="g" style="left:79px;top:603.15px"><i style="width:9px">D</i><i style="width:3px">i</i><i style="width:11px">m</i><i style="width:11px">m</i><i style="width:7px">e</i><i style="width:4px">r</i></div>
<div class="g" style="left:332px;top:603.15px"><i style="width:9px">S</i><i style="width:7px">y</i><i style="width:11px">m</i><i style="width:7px">b</i><i style="width:7px">o</i><i style="width:3px">l</i><i style="width:4px"></i><i style="width:9px">D</i><i style="width:7px">e</i><i style="width:3px">f</i><i style="width:3px">i</i><i style="width:7px">n</i><i style="width:3px">i</i><i style="width:4px">t</i><i style="width:3px">i</i><i style="width:7px">o</i><i style="width:7px">n</i></div>
<div class="g" style="left:585px;top:603.15px"><i style="width:9px">P</i><i style="width:7px">o</i><i style="width:9px">w</i><i style="width:7px">e</i><i style="width:4px">r</i><i style="width:9px">S</i><i style="width:3px">i</i><i style="width:7px">g</i><i style="width:7px">n</i><i style="width:7px">a</i><i style="width:3px">l</i><i style="width:4px"></i><i style="width:9px">S</i><i style="width:7px">y</i><i style="width:11px">m</i><i style="width:7px">b</i><i style="width:7px">o</i><i style="width:3px">l</i><i style="width:7px">s</i></div>
<div class="a" style="left:5px;top:620px;width:71px;height:18px;background:#f0f0f0"></div>
<div class="a" style="left:5px;top:620px;width:71px;height:1px;background:#ffffff"></div>
<div class="a" style="left:5px;top:620px;width:1px;height:18px;background:#ffffff"></div>
<div class="a" style="left:5px;top:638px;width:72px;height:1px;background:#000"></div>
<div class="a" style="left:76px;top:620px;width:1px;height:18px;background:#000"></div>
<div class="g" style="left:34px;top:622.15px"><i style="width:7px">2</i><i style="width:7px">8</i></div>
<div class="tri" style="top:625px"></div>
<div class="a" style="left:77px;top:638px;width:759px;height:1px;background:#c0c0c0"></div>
<div class="g" style="left:79px;top:622.15px"><i style="width:7px">T</i><i style="width:4px">r</i><i style="width:3px">i</i><i style="width:7px">a</i><i style="width:7px">n</i><i style="width:7px">g</i><i style="width:3px">l</i><i style="width:7px">e</i></div>
<div class="g" style="left:332px;top:622.15px"><i style="width:9px">S</i><i style="width:7px">y</i><i style="width:11px">m</i><i style="width:7px">b</i><i style="width:7px">o</i><i style="width:3px">l</i><i style="width:4px"></i><i style="width:9px">D</i><i style="width:7px">e</i><i style="width:3px">f</i><i style="width:3px">i</i><i style="width:7px">n</i><i style="width:3px">i</i><i style="width:4px">t</i><i style="width:3px">i</i><i style="width:7px">o</i><i style="width:7px">n</i></div>
<div class="g" style="left:585px;top:622.15px"><i style="width:9px">C</i><i style="width:7px">o</i><i style="width:7px">n</i><i style="width:4px">t</i><i style="width:7px">a</i><i style="width:3px">i</i><i style="width:7px">n</i><i style="width:7px">e</i><i style="width:4px">r</i><i style="width:7px">s</i></div>
<div class="a" style="left:5px;top:639px;width:71px;height:18px;background:#f0f0f0"></div>
<div class="a" style="left:5px;top:639px;width:71px;height:1px;background:#ffffff"></div>
<div class="a" style="left:5px;top:639px;width:1px;height:18px;background:#ffffff"></div>
<div class="a" style="left:5px;top:657px;width:72px;height:1px;background:#000"></div>
<div class="a" style="left:76px;top:639px;width:1px;height:18px;background:#000"></div>
<div class="g" style="left:34px;top:641.15px"><i style="width:7px">2</i><i style="width:7px">9</i></div>
<div class="tri" style="top:644px"></div>
<div class="a" style="left:77px;top:657px;width:759px;height:1px;background:#c0c0c0"></div>
<div class="g" style="left:79px;top:641.15px"><i style="width:13px">W</i><i style="width:7px">a</i><i style="width:7px">s</i><i style="width:7px">h</i><i style="width:7px">s</i><i style="width:4px">t</i><i style="width:7px">a</i><i style="width:7px">n</i><i style="width:7px">d</i><i style="width:4px"></i><i style="width:9px">S</i><i style="width:7px">y</i><i style="width:11px">m</i><i style="width:7px">b</i><i style="width:7px">o</i><i style="width:3px">l</i></div>
<div class="g" style="left:332px;top:641.15px"><i style="width:9px">S</i><i style="width:7px">y</i><i style="width:11px">m</i><i style="width:7px">b</i><i style="width:7px">o</i><i style="width:3px">l</i><i style="width:4px"></i><i style="width:9px">D</i><i style="width:7px">e</i><i style="width:3px">f</i><i style="width:3px">i</i><i style="width:7px">n</i><i style="width:3px">i</i><i style="width:4px">t</i><i style="width:3px">i</i><i style="width:7px">o</i><i style="width:7px">n</i></div>
<div class="g" style="left:585px;top:641.15px"><i style="width:9px">E</i><i style="width:7px">x</i><i style="width:7px">h</i><i style="width:3px">i</i><i style="width:7px">b</i><i style="width:3px">i</i><i style="width:4px">t</i><i style="width:4px"></i><i style="width:9px">S</i><i style="width:7px">y</i><i style="width:11px">m</i><i style="width:7px">b</i><i style="width:7px">o</i><i style="width:3px">l</i><i style="width:7px">s</i></div>
<div class="a" style="left:5px;top:658px;width:71px;height:18px;background:#f0f0f0"></div>
<div class="a" style="left:5px;top:658px;width:71px;height:1px;background:#ffffff"></div>
<div class="a" style="left:5px;top:658px;width:1px;height:18px;background:#ffffff"></div>
<div class="a" style="left:5px;top:676px;width:72px;height:1px;background:#000"></div>
<div class="a" style="left:76px;top:658px;width:1px;height:18px;background:#000"></div>
<div class="g" style="left:34px;top:660.15px"><i style="width:7px">3</i><i style="width:7px">0</i></div>
<div class="tri" style="top:663px"></div>
<div class="a" style="left:77px;top:676px;width:759px;height:1px;background:#c0c0c0"></div>
<div class="g" style="left:79px;top:660.15px"><i style="width:9px">C</i><i style="width:7px">0</i><i style="width:7px">2</i><i style="width:4px">-</i><i style="width:10px">G</i><i style="width:7px">0</i><i style="width:7px">2</i><i style="width:4px"></i><i style="width:7px">T</i><i style="width:7px">e</i><i style="width:7px">x</i><i style="width:4px">t</i><i style="width:7px">u</i><i style="width:4px">r</i><i style="width:7px">e</i></div>
<div class="g" style="left:332px;top:660.15px"><i style="width:7px">T</i><i style="width:7px">e</i><i style="width:7px">x</i><i style="width:4px">t</i><i style="width:7px">u</i><i style="width:4px">r</i><i style="width:7px">e</i><i style="width:4px"></i><i style="width:9px">D</i><i style="width:7px">e</i><i style="width:3px">f</i><i style="width:3px">i</i><i style="width:7px">n</i><i style="width:3px">i</i><i style="width:4px">t</i><i style="width:3px">i</i><i style="width:7px">o</i><i style="width:7px">n</i></div>
<div class="g" style="left:585px;top:660.15px"><i style="width:9px">E</i><i style="width:7px">x</i><i style="width:7px">h</i><i style="width:3px">i</i><i style="width:7px">b</i><i style="width:3px">i</i><i style="width:4px">t</i><i style="width:4px"></i><i style="width:7px">T</i><i style="width:7px">e</i><i style="width:7px">x</i><i style="width:4px">t</i><i style="width:7px">u</i><i style="width:4px">r</i><i style="width:7px">e</i><i style="width:7px">s</i></div>
<div class="a" style="left:5px;top:677px;width:71px;height:18px;background:#f0f0f0"></div>
<div class="a" style="left:5px;top:677px;width:71px;height:1px;background:#ffffff"></div>
<div class="a" style="left:5px;top:677px;width:1px;height:18px;background:#ffffff"></div>
<div class="a" style="left:5px;top:695px;width:72px;height:1px;background:#000"></div>
<div class="a" style="left:76px;top:677px;width:1px;height:18px;background:#000"></div>
<div class="g" style="left:34px;top:679.15px"><i style="width:7px">3</i><i style="width:7px;transform:none"><svg width="7" height="14" style="display:block"><path d="M3.4 1.85h1.5v10h-1.5z M4.9 1.85L3.4 1.85L0.8 3.7L0.8 4.7L3.4 3.1z"/></svg></i></div>
<div class="tri" style="top:682px"></div>
<div class="a" style="left:77px;top:695px;width:759px;height:1px;background:#c0c0c0"></div>
<div class="g" style="left:79px;top:679.15px"><i style="width:9px">C</i><i style="width:7px">0</i><i style="width:7px">2</i><i style="width:4px">-</i><i style="width:10px">G</i><i style="width:7px">0</i><i style="width:7px;transform:none"><svg width="7" height="14" style="display:block"><path d="M3.4 1.85h1.5v10h-1.5z M4.9 1.85L3.4 1.85L0.8 3.7L0.8 4.7L3.4 3.1z"/></svg></i><i style="width:4px"></i><i style="width:7px">T</i><i style="width:7px">e</i><i style="width:7px">x</i><i style="width:4px">t</i><i style="width:7px">u</i><i style="width:4px">r</i><i style="width:7px">e</i></div>
<div class="g" style="left:332px;top:679.15px"><i style="width:7px">T</i><i style="width:7px">e</i><i style="width:7px">x</i><i style="width:4px">t</i><i style="width:7px">u</i><i style="width:4px">r</i><i style="width:7px">e</i><i style="width:4px"></i><i style="width:9px">D</i><i style="width:7px">e</i><i style="width:3px">f</i><i style="width:3px">i</i><i style="width:7px">n</i><i style="width:3px">i</i><i style="width:4px">t</i><i style="width:3px">i</i><i style="width:7px">o</i><i style="width:7px">n</i></div>
<div class="g" style="left:585px;top:679.15px"><i style="width:9px">E</i><i style="width:7px">x</i><i style="width:7px">h</i><i style="width:3px">i</i><i style="width:7px">b</i><i style="width:3px">i</i><i style="width:4px">t</i><i style="width:4px"></i><i style="width:7px">T</i><i style="width:7px">e</i><i style="width:7px">x</i><i style="width:4px">t</i><i style="width:7px">u</i><i style="width:4px">r</i><i style="width:7px">e</i><i style="width:7px">s</i></div>
<div class="a" style="left:5px;top:696px;width:71px;height:18px;background:#f0f0f0"></div>
<div class="a" style="left:5px;top:696px;width:71px;height:1px;background:#ffffff"></div>
<div class="a" style="left:5px;top:696px;width:1px;height:18px;background:#ffffff"></div>
<div class="a" style="left:5px;top:714px;width:72px;height:1px;background:#000"></div>
<div class="a" style="left:76px;top:696px;width:1px;height:18px;background:#000"></div>
<div class="g" style="left:34px;top:698.15px"><i style="width:7px">3</i><i style="width:7px">2</i></div>
<div class="tri" style="top:701px"></div>
<div class="a" style="left:77px;top:714px;width:759px;height:1px;background:#c0c0c0"></div>
<div class="g" style="left:79px;top:698.15px"><i style="width:7px">2</i><i style="width:4px">/</i><i style="width:7px">L</i><i style="width:7px">2</i></div>
<div class="g" style="left:332px;top:698.15px"><i style="width:9px">V</i><i style="width:3px">i</i><i style="width:7px">e</i><i style="width:9px">w</i><i style="width:7px">p</i><i style="width:7px">o</i><i style="width:4px">r</i><i style="width:4px">t</i></div>
<div class="g" style="left:585px;top:698.15px"><i style="width:7px">L</i><i style="width:7px">2</i></div>
<div class="a" style="left:5px;top:715px;width:71px;height:18px;background:#f0f0f0"></div>
<div class="a" style="left:5px;top:715px;width:71px;height:1px;background:#ffffff"></div>
<div class="a" style="left:5px;top:715px;width:1px;height:18px;background:#ffffff"></div>
<div class="a" style="left:5px;top:733px;width:72px;height:1px;background:#000"></div>
<div class="a" style="left:76px;top:715px;width:1px;height:18px;background:#000"></div>
<div class="g" style="left:34px;top:717.15px"><i style="width:7px">3</i><i style="width:7px">3</i></div>
<div class="tri" style="top:720px"></div>
<div class="a" style="left:77px;top:733px;width:759px;height:1px;background:#c0c0c0"></div>
<div class="g" style="left:79px;top:717.15px"><i style="width:7px;transform:none"><svg width="7" height="14" style="display:block"><path d="M3.4 1.85h1.5v10h-1.5z M4.9 1.85L3.4 1.85L0.8 3.7L0.8 4.7L3.4 3.1z"/></svg></i><i style="width:4px">/</i><i style="width:7px">L</i><i style="width:7px">2</i></div>
<div class="g" style="left:332px;top:717.15px"><i style="width:9px">V</i><i style="width:3px">i</i><i style="width:7px">e</i><i style="width:9px">w</i><i style="width:7px">p</i><i style="width:7px">o</i><i style="width:4px">r</i><i style="width:4px">t</i></div>
<div class="g" style="left:585px;top:717.15px"><i style="width:7px">L</i><i style="width:7px">2</i></div>
<div class="a" style="left:5px;top:734px;width:71px;height:18px;background:#f0f0f0"></div>
<div class="a" style="left:5px;top:734px;width:71px;height:1px;background:#ffffff"></div>
<div class="a" style="left:5px;top:734px;width:1px;height:18px;background:#ffffff"></div>
<div class="a" style="left:5px;top:752px;width:72px;height:1px;background:#000"></div>
<div class="a" style="left:76px;top:734px;width:1px;height:18px;background:#000"></div>
<div class="g" style="left:34px;top:736.15px"><i style="width:7px">3</i><i style="width:7px">4</i></div>
<div class="tri" style="top:739px"></div>
<div class="a" style="left:77px;top:752px;width:759px;height:1px;background:#c0c0c0"></div>
<div class="g" style="left:79px;top:736.15px"><i style="width:7px">L</i><i style="width:3px">I</i><i style="width:10px">G</i><i style="width:9px">H</i><i style="width:7px">T</i><i style="width:4px"></i><i style="width:8px">F</i><i style="width:3px">I</i><i style="width:7px">X</i><i style="width:7px">T</i><i style="width:9px">U</i><i style="width:9px">R</i><i style="width:9px">E</i><i style="width:4px"></i><i style="width:9px">S</i><i style="width:9px">C</i><i style="width:9px">H</i><i style="width:9px">E</i><i style="width:9px">D</i><i style="width:9px">U</i><i style="width:7px">L</i><i style="width:9px">E</i></div>
<div class="g" style="left:332px;top:736.15px"><i style="width:13px">W</i><i style="width:7px">o</i><i style="width:4px">r</i><i style="width:7px">k</i><i style="width:7px">s</i><i style="width:7px">h</i><i style="width:7px">e</i><i style="width:7px">e</i><i style="width:4px">t</i></div>
<div class="g" style="left:585px;top:736.15px"><i style="width:9px">R</i><i style="width:7px">e</i><i style="width:7px">s</i><i style="width:7px">o</i><i style="width:7px">u</i><i style="width:4px">r</i><i style="width:7px">c</i><i style="width:7px">e</i><i style="width:4px"></i><i style="width:11px">M</i><i style="width:7px">a</i><i style="width:7px">n</i><i style="width:7px">a</i><i style="width:7px">g</i><i style="width:7px">e</i><i style="width:4px">r</i><i style="width:4px"></i><i style="width:9px">R</i><i style="width:7px">o</i><i style="width:7px">o</i><i style="width:4px">t</i></div>
<div class="a" style="left:5px;top:753px;width:71px;height:18px;background:#f0f0f0"></div>
<div class="a" style="left:5px;top:753px;width:71px;height:1px;background:#ffffff"></div>
<div class="a" style="left:5px;top:753px;width:1px;height:18px;background:#ffffff"></div>
<div class="a" style="left:5px;top:771px;width:72px;height:1px;background:#000"></div>
<div class="a" style="left:76px;top:753px;width:1px;height:18px;background:#000"></div>
<div class="g" style="left:34px;top:755.15px"><i style="width:7px">3</i><i style="width:7px">5</i></div>
<div class="tri" style="top:758px"></div>
<div class="a" style="left:77px;top:771px;width:759px;height:1px;background:#c0c0c0"></div>
<div class="g" style="left:79px;top:755.15px"><i style="width:7px">L</i><i style="width:3px">i</i><i style="width:7px">g</i><i style="width:7px">h</i><i style="width:4px">t</i><i style="width:3px">i</i><i style="width:7px">n</i><i style="width:7px">g</i><i style="width:4px"></i><i style="width:8px">F</i><i style="width:3px">i</i><i style="width:7px">x</i><i style="width:4px">t</i><i style="width:7px">u</i><i style="width:4px">r</i><i style="width:7px">e</i><i style="width:4px"></i><i style="width:9px">C</i><i style="width:7px">o</i><i style="width:7px">u</i><i style="width:7px">n</i><i style="width:4px">t</i><i style="width:4px"></i><i style="width:4px">-</i><i style="width:4px"></i><i style="width:9px">P</i><i style="width:7px">a</i><i style="width:4px">r</i><i style="width:7px">a</i><i style="width:3px">l</i><i style="width:3px">l</i><i style="width:7px">e</i><i style="width:3px">l</i></div>
<div class="g" style="left:332px;top:755.15px"><i style="width:13px">W</i><i style="width:7px">o</i><i style="width:4px">r</i><i style="width:7px">k</i><i style="width:7px">s</i><i style="width:7px">h</i><i style="width:7px">e</i><i style="width:7px">e</i><i style="width:4px">t</i></div>
<div class="g" style="left:585px;top:755.15px"><i style="width:9px">R</i><i style="width:7px">e</i><i style="width:7px">s</i><i style="width:7px">o</i><i style="width:7px">u</i><i style="width:4px">r</i><i style="width:7px">c</i><i style="width:7px">e</i><i style="width:4px"></i><i style="width:11px">M</i><i style="width:7px">a</i><i style="width:7px">n</i><i style="width:7px">a</i><i style="width:7px">g</i><i style="width:7px">e</i><i style="width:4px">r</i><i style="width:4px"></i><i style="width:9px">R</i><i style="width:7px">o</i><i style="width:7px">o</i><i style="width:4px">t</i></div>
<div class="a" style="left:329px;top:107px;width:1px;height:665px;background:#c0c0c0"></div>
<div class="a" style="left:582px;top:107px;width:1px;height:665px;background:#c0c0c0"></div>
<div class="a" style="left:835px;top:107px;width:1px;height:665px;background:#c0c0c0"></div>
<div class="a" style="left:329px;top:107px;width:2px;height:20px;background:#000"></div>
<div class="a" style="left:77px;top:125px;width:254px;height:2px;background:#000"></div>
</div>
</body></html>
